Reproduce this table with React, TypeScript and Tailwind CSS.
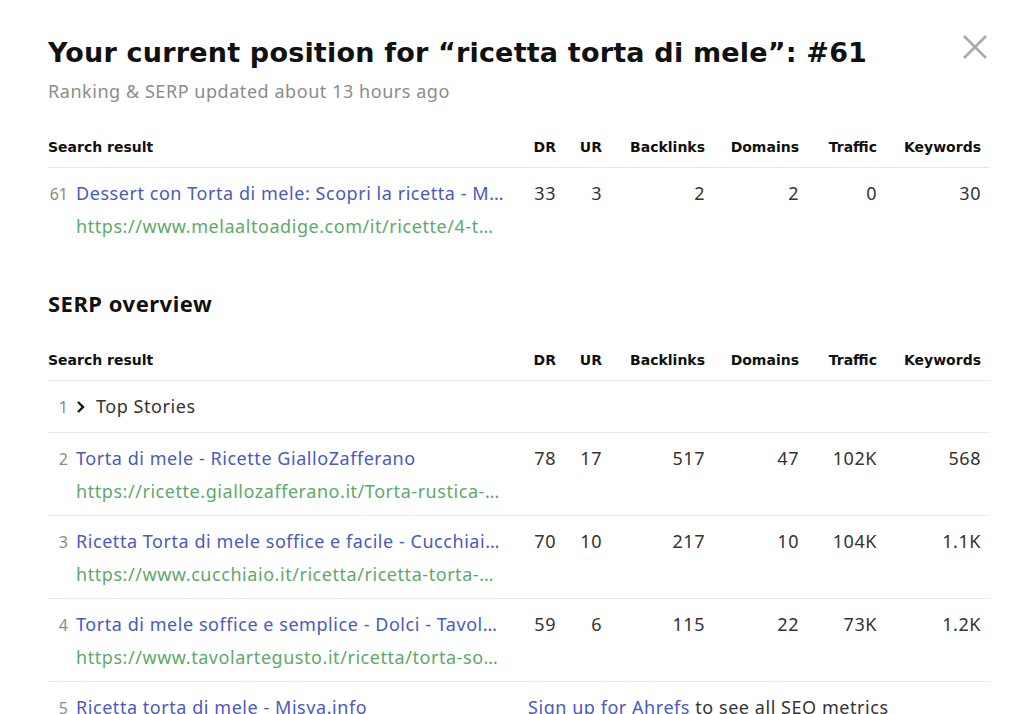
import React from "react";

interface Row {
  pos: number;
  title: string;
  url: string;
  dr: string;
  ur: string;
  backlinks: string;
  domains: string;
  traffic: string;
  keywords: string;
}

const cols = "grid grid-cols-[462px_46px_46px_103px_94px_78px_104px] pr-[9px]";

const current: Row = {
  pos: 61,
  title: "Dessert con Torta di mele: Scopri la ricetta - Mela Alto Adige",
  url: "https://www.melaaltoadige.com/it/ricette/4-torta-di-mele",
  dr: "33",
  ur: "3",
  backlinks: "2",
  domains: "2",
  traffic: "0",
  keywords: "30",
};

const serp: Row[] = [
  {
    pos: 2,
    title: "Torta di mele - Ricette GialloZafferano",
    url: "https://ricette.giallozafferano.it/Torta-rustica-di-mele.html",
    dr: "78",
    ur: "17",
    backlinks: "517",
    domains: "47",
    traffic: "102K",
    keywords: "568",
  },
  {
    pos: 3,
    title: "Ricetta Torta di mele soffice e facile - Cucchiaio d'Argento",
    url: "https://www.cucchiaio.it/ricetta/ricetta-torta-mele-soffice/",
    dr: "70",
    ur: "10",
    backlinks: "217",
    domains: "10",
    traffic: "104K",
    keywords: "1.1K",
  },
  {
    pos: 4,
    title: "Torta di mele soffice e semplice - Dolci - Tavolartegusto",
    url: "https://www.tavolartegusto.it/ricetta/torta-soffice-di-mele/",
    dr: "59",
    ur: "6",
    backlinks: "115",
    domains: "22",
    traffic: "73K",
    keywords: "1.2K",
  },
];

const HeaderRow = () => (
  <div
    className={`${cols} border-b border-[#e8e8e8] h-[41px] items-center font-['DejaVu_Sans'] font-bold text-[14px] tracking-normal text-[#111]`}
  >
    <div>Search result</div>
    <div className="text-right">DR</div>
    <div className="text-right">UR</div>
    <div className="text-right">Backlinks</div>
    <div className="text-right">Domains</div>
    <div className="text-right">Traffic</div>
    <div className="text-right">Keywords</div>
  </div>
);

const Pos = ({ n }: { n: number }) => (
  <span className="w-[20px] mr-[8px] shrink-0 text-right text-[16px] tracking-normal text-[#8a8a8a]">{n}</span>
);

const ResultRow = ({ row, last }: { row: Row; last?: boolean }) => (
  <div className={`${cols} pt-[10px] ${last ? "" : "pb-[6px] border-b border-[#ececec]"}`}>
    <div className="flex items-baseline min-w-0 pr-[6px] leading-[30px]">
      <Pos n={row.pos} />
      <div className="min-w-0 flex flex-col">
        <span className="truncate leading-[30px] text-[#4a5ac0]">{row.title}</span>
        <span className="truncate leading-[36px] text-[#5ea96a]">{row.url}</span>
      </div>
    </div>
    <div className="text-right leading-[30px]">{row.dr}</div>
    <div className="text-right leading-[30px]">{row.ur}</div>
    <div className="text-right leading-[30px]">{row.backlinks}</div>
    <div className="text-right leading-[30px]">{row.domains}</div>
    <div className="text-right leading-[30px]">{row.traffic}</div>
    <div className="text-right leading-[30px]">{row.keywords}</div>
  </div>
);

export default function App() {
  return (
    <div className="h-[714px] bg-white font-['Noto_Sans',sans-serif] text-[18px] tracking-[0.55px] text-[#333] pl-[48px] pr-[34px] pt-[30px] overflow-hidden">
      <div className="flex items-start justify-between">
        <h1 className="font-['DejaVu_Sans',sans-serif] font-bold text-[27px] leading-[46px] text-[#111] tracking-[0.2px]">
          Your current position for “ricetta torta di mele”: #61
        </h1>
        <button className="mt-[4px] mr-[2px] text-[#aaaaaa]" aria-label="Close">
          <svg width="26" height="26" viewBox="0 0 26 26" fill="none" stroke="currentColor" strokeWidth="2.6">
            <path d="M2 2 L24 24 M24 2 L2 24" />
          </svg>
        </button>
      </div>
      <div className="text-[#8c8c8c] leading-[26px] mt-[2px]">Ranking &amp; SERP updated about 13 hours ago</div>

      <div className="w-[942px] mt-[23px]">
        <HeaderRow />
        <ResultRow row={current} last />
      </div>

      <h2 className="font-bold text-[22px] tracking-[0.5px] text-[#111] leading-[30px] mt-[44px]">SERP overview</h2>

      <div className="w-[942px] mt-[22px]">
        <HeaderRow />
        <div className={`${cols} h-[52px] items-center border-b border-[#ececec]`}>
          <div className="flex items-center">
            <Pos n={1} />
            <svg width="14" height="14" viewBox="0 0 14 14" className="mr-[8px] -ml-[2px]">
              <path d="M4 2 L9 7 L4 12" fill="none" stroke="#111" strokeWidth="2.4" />
            </svg>
            <span className="text-[#333]">Top Stories</span>
          </div>
        </div>
        {serp.map((r) => (
          <ResultRow key={r.pos} row={r} />
        ))}
        <div className={`${cols} pt-[10px]`}>
          <div className="flex items-baseline min-w-0 leading-[30px]">
            <Pos n={5} />
            <span className="truncate text-[#4a5ac0]">Ricetta torta di mele - Misya.info</span>
          </div>
          <div className="col-span-6 leading-[30px] pl-[18px] whitespace-nowrap">
            <span className="text-[#4a5ac0]">Sign up for Ahrefs</span> to see all SEO metrics
          </div>
        </div>
      </div>
    </div>
  );
}
